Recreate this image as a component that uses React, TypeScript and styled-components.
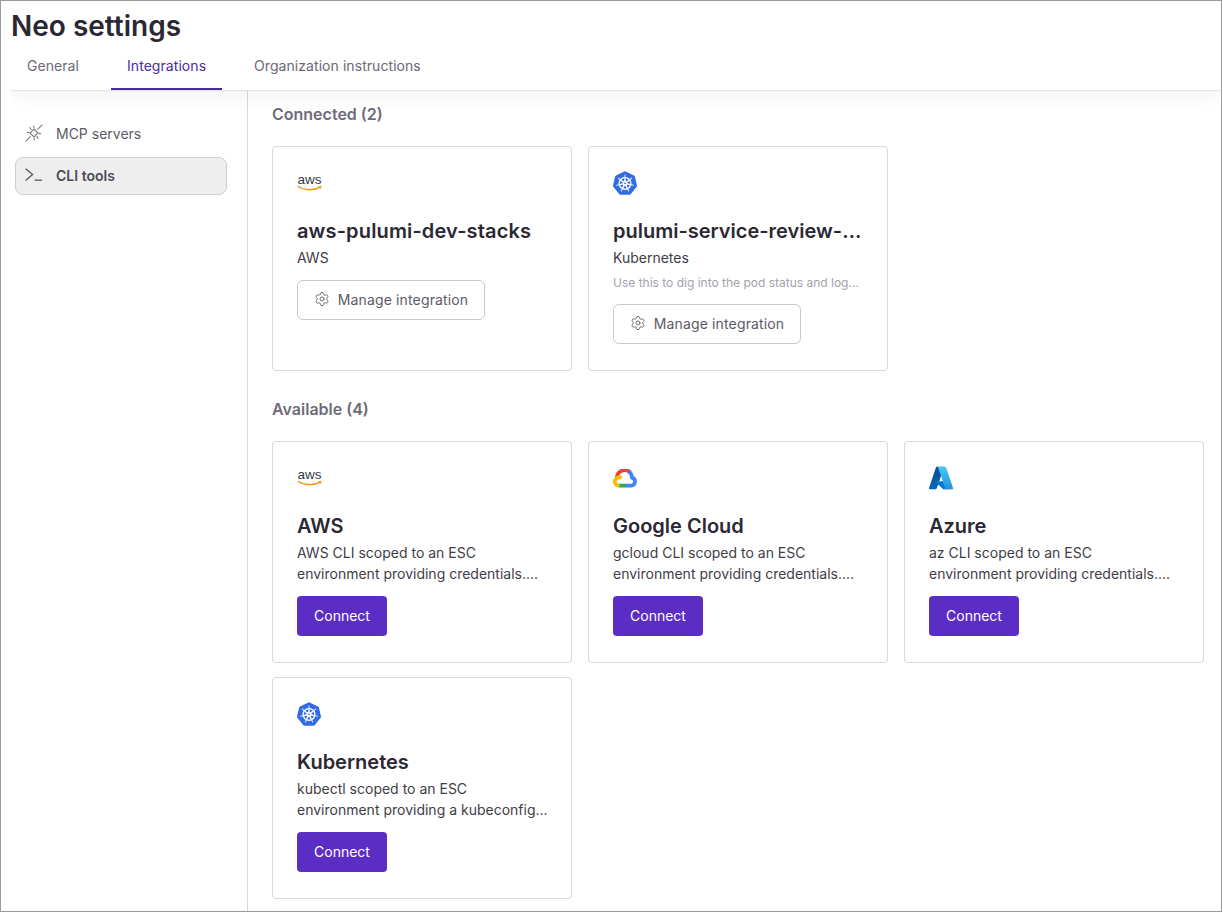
import styled, { createGlobalStyle } from "styled-components";
import { Settings } from "lucide-react";
import { SiKubernetes } from "react-icons/si";

const GlobalStyle = createGlobalStyle`
  html, body {
    margin: 0;
    padding: 0;
    background: #fff;
  }
  * {
    box-sizing: border-box;
  }
  body {
    font-family: Inter, "Liberation Sans", sans-serif;
    color: #2b2833;
  }
`;

const Frame = styled.div`
  width: 1222px;
  height: 912px;
  border: 1px solid #9a9a9a;
  padding-left: 10px;
  overflow: hidden;
  display: flex;
  flex-direction: column;
`;

const Header = styled.header`
  position: relative;
  z-index: 1;
  height: 90px;
  flex: none;
  border-bottom: 1px solid #e2e2e4;
  box-shadow: 0 6px 16px rgba(0, 0, 0, 0.05);
  clip-path: inset(0 -30px -40px 0);
  background: #fff;
`;

const Title = styled.h1`
  margin: 0;
  padding-top: 7px;
  font-size: 28px;
  line-height: 36px;
  font-weight: 600;
  color: #2b2833;
`;

const Tabs = styled.nav`
  display: flex;
  gap: 16px;
`;

const Tab = styled.div<{ $active?: boolean }>`
  height: 46px;
  padding: 0 16px 2px;
  display: flex;
  align-items: center;
  font-size: 14px;
  letter-spacing: 0.06px;
  color: ${(p) => (p.$active ? "#4d2a9e" : "#6b6975")};
  border-bottom: 2px solid ${(p) => (p.$active ? "#4d2a9e" : "transparent")};
`;

const Body = styled.div`
  flex: 1;
  display: flex;
  min-height: 0;
`;

const Sidebar = styled.aside`
  width: 237px;
  flex: none;
  border-right: 1px solid #d8d8da;
  padding: 23px 20px 0 4px;
  display: flex;
  flex-direction: column;
  gap: 5px;
`;

const SideItem = styled.div<{ $active?: boolean }>`
  height: 38px;
  display: flex;
  align-items: center;
  gap: 13px;
  padding: 0 0 ${(p) => (p.$active ? "2px" : "0")} 9px;
  font-size: 14px;
  font-weight: ${(p) => (p.$active ? 600 : 400)};
  color: ${(p) => (p.$active ? "#4b4955" : "#5c5a66")};
  background: ${(p) => (p.$active ? "#eeeeee" : "transparent")};
  border: 1px solid ${(p) => (p.$active ? "#cfcfd1" : "transparent")};
  border-radius: 8px;
`;

const Main = styled.main`
  flex: 1;
  padding: 11px 0 0 24px;
`;

const SectionTitle = styled.h2<{ $spaced?: boolean }>`
  margin: ${(p) => (p.$spaced ? "26px 0 20px" : "0 0 20px")};
  font-size: 16px;
  line-height: 24px;
  font-weight: 600;
  color: #6e6c78;
`;

const CardGrid = styled.div`
  display: grid;
  grid-template-columns: repeat(3, 300px);
  gap: 14px 16px;
`;

const Card = styled.div<{ $tall?: boolean }>`
  height: ${(p) => (p.$tall ? "225px" : "222px")};
  padding: 24px;
  background: #fff;
  border: 1px solid #d8d8da;
  border-radius: 4px;
  display: flex;
  flex-direction: column;
  align-items: flex-start;
`;

const LogoSlot = styled.div`
  height: 24px;
  display: flex;
  align-items: center;
  flex: none;
`;

const CardTitle = styled.h3<{ $wide?: boolean }>`
  margin: 20px 0 0;
  width: 100%;
  flex: none;
  font-size: 20px;
  line-height: 32px;
  font-weight: 600;
  letter-spacing: ${(p) => (p.$wide ? "0.14px" : "0")};
  color: #2b2833;
  white-space: nowrap;
  overflow: hidden;
  text-overflow: ellipsis;
`;

const CardText = styled.p`
  margin: 0;
  width: 100%;
  flex: none;
  font-size: 14px;
  line-height: 21px;
  color: #3f3d48;
  white-space: nowrap;
`;

const CardSubtext = styled.p`
  margin: 6px 0 0;
  width: 100%;
  flex: none;
  font-size: 12px;
  line-height: 18px;
  color: #a3a2aa;
  white-space: nowrap;
  overflow: hidden;
  text-overflow: ellipsis;
`;

const ManageButton = styled.button`
  margin-top: 12px;
  height: 40px;
  width: 188px;
  flex: none;
  padding: 0 0 2px;
  display: flex;
  align-items: center;
  justify-content: center;
  gap: 8px;
  font: inherit;
  font-size: 14px;
  letter-spacing: 0.14px;
  color: #5c5a66;
  background: #fff;
  border: 1px solid #c9c9cc;
  border-radius: 6px;
`;

const ConnectButton = styled.button`
  margin-top: 12px;
  height: 40px;
  width: 90px;
  flex: none;
  padding: 0 0 2px;
  font: inherit;
  font-size: 14px;
  color: #fff;
  background: #5b2dc4;
  border: none;
  border-radius: 4px;
`;

const AwsLogo = () => (
  <svg width="26" height="22" viewBox="0 -2 26 22">
    <text
      x="0.5"
      y="10"
      fontFamily="'Liberation Sans', sans-serif"
      fontSize="13"
      textLength="24"
      lengthAdjust="spacingAndGlyphs"
      fill="#2f3a46"
    >
      aws
    </text>
    <path d="M0.8 12.2C7 16.6 17 16.8 23.4 12.8" fill="none" stroke="#f79a1c" strokeWidth="1.5" />
    <path d="M21 12.3l3.6-.6-.7 3.3z" fill="#f79a1c" />
  </svg>
);

const KubernetesLogo = () => <SiKubernetes size={24} color="#326ce5" />;

const GoogleCloudLogo = () => (
  <svg width="24" height="19" viewBox="0 0 24 19" fill="none" strokeWidth="3.8">
    <path d="M3.8 8.4A8 8 0 0 1 17.2 3.4" stroke="#ea4335" />
    <path d="M15.9 2.4A8 8 0 0 1 19 8.6 4.1 4.1 0 0 1 18.6 16.6H12" stroke="#4285f4" />
    <path d="M12.5 16.6H5.5" stroke="#34a853" />
    <path d="M6.5 16.6A4.1 4.1 0 1 1 8.6 9.4" stroke="#fbbc05" />
  </svg>
);

const AzureLogo = () => (
  <svg width="24" height="24" viewBox="4 5 88 86">
    <defs>
      <linearGradient id="azDark" x1="0.6" y1="0" x2="0.2" y2="1">
        <stop offset="0" stopColor="#114a8b" />
        <stop offset="1" stopColor="#0669bc" />
      </linearGradient>
      <linearGradient id="azLight" x1="0.4" y1="0" x2="0.6" y2="1">
        <stop offset="0" stopColor="#3ccbf4" />
        <stop offset="1" stopColor="#2892df" />
      </linearGradient>
    </defs>
    <path
      fill="url(#azDark)"
      d="M33.34 6.54h26.04l-27.03 80.1a4.15 4.15 0 0 1-3.94 2.81H8.15a4.14 4.14 0 0 1-3.93-5.47L29.4 9.38a4.15 4.15 0 0 1 3.94-2.83z"
    />
    <path
      fill="#0078d4"
      d="M71.17 60.26H29.88a1.91 1.91 0 0 0-1.3 3.31l26.53 24.76a4.17 4.17 0 0 0 2.85 1.13h23.38z"
    />
    <path
      fill="url(#azLight)"
      d="M66.6 9.36a4.14 4.14 0 0 0-3.93-2.82H33.65a4.15 4.15 0 0 1 3.93 2.82l25.18 74.62a4.15 4.15 0 0 1-3.93 5.48h29.02a4.15 4.15 0 0 0 3.93-5.48z"
    />
  </svg>
);

const McpIcon = () => (
  <svg width="18" height="18" viewBox="0 0 18 18" fill="none" stroke="#7b7985" strokeWidth="1.1">
    <path d="M0.6 17.4L5.6 12.4M12.4 5.6L17.4 0.6" />
    <path d="M9 5L13 9 9 13 5 9z" />
    <path d="M4.6 3.2L6.4 6M8.6 1.6L8.9 4M1.8 8.2L4.6 8.6M13.4 14.8L11.6 12M9.4 16.4L9.1 14M16.2 9.8L13.4 9.4" />
  </svg>
);

const CliIcon = () => (
  <svg width="18" height="14" viewBox="0 0 18 14" fill="none" stroke="#55535f" strokeWidth="1.3">
    <path d="M0.6 0.8L7.6 6.6 0.6 12.6" />
    <path d="M9.6 12.2H17" />
  </svg>
);

const logos = {
  aws: <AwsLogo />,
  k8s: <KubernetesLogo />,
  gcp: <GoogleCloudLogo />,
  azure: <AzureLogo />,
};

const available = [
  {
    logo: logos.aws,
    name: "AWS",
    lines: ["AWS CLI scoped to an ESC", "environment providing credentials...."],
  },
  {
    logo: logos.gcp,
    name: "Google Cloud",
    lines: ["gcloud CLI scoped to an ESC", "environment providing credentials...."],
  },
  {
    logo: logos.azure,
    name: "Azure",
    lines: ["az CLI scoped to an ESC", "environment providing credentials...."],
  },
  {
    logo: logos.k8s,
    name: "Kubernetes",
    lines: ["kubectl scoped to an ESC", "environment providing a kubeconfig..."],
  },
];

const Manage = () => (
  <ManageButton>
    <Settings size={16} strokeWidth={1.3} />
    Manage integration
  </ManageButton>
);

export default function App() {
  return (
    <>
      <GlobalStyle />
      <Frame>
        <Header>
          <Title>Neo settings</Title>
          <Tabs>
            <Tab>General</Tab>
            <Tab $active>Integrations</Tab>
            <Tab>Organization instructions</Tab>
          </Tabs>
        </Header>
        <Body>
          <Sidebar>
            <SideItem>
              <McpIcon />
              MCP servers
            </SideItem>
            <SideItem $active>
              <CliIcon />
              CLI tools
            </SideItem>
          </Sidebar>
          <Main>
            <SectionTitle>Connected (2)</SectionTitle>
            <CardGrid>
              <Card $tall>
                <LogoSlot>{logos.aws}</LogoSlot>
                <CardTitle $wide>aws-pulumi-dev-stacks</CardTitle>
                <CardText>AWS</CardText>
                <Manage />
              </Card>
              <Card $tall>
                <LogoSlot>{logos.k8s}</LogoSlot>
                <CardTitle>pulumi-service-review-stacks</CardTitle>
                <CardText>Kubernetes</CardText>
                <CardSubtext>Use this to dig into the pod status and logs for review stacks</CardSubtext>
                <Manage />
              </Card>
            </CardGrid>
            <SectionTitle $spaced>Available (4)</SectionTitle>
            <CardGrid>
              {available.map((item) => (
                <Card key={item.name}>
                  <LogoSlot>{item.logo}</LogoSlot>
                  <CardTitle>{item.name}</CardTitle>
                  <CardText>
                    {item.lines[0]}
                    <br />
                    {item.lines[1]}
                  </CardText>
                  <ConnectButton>Connect</ConnectButton>
                </Card>
              ))}
            </CardGrid>
          </Main>
        </Body>
      </Frame>
    </>
  );
}
